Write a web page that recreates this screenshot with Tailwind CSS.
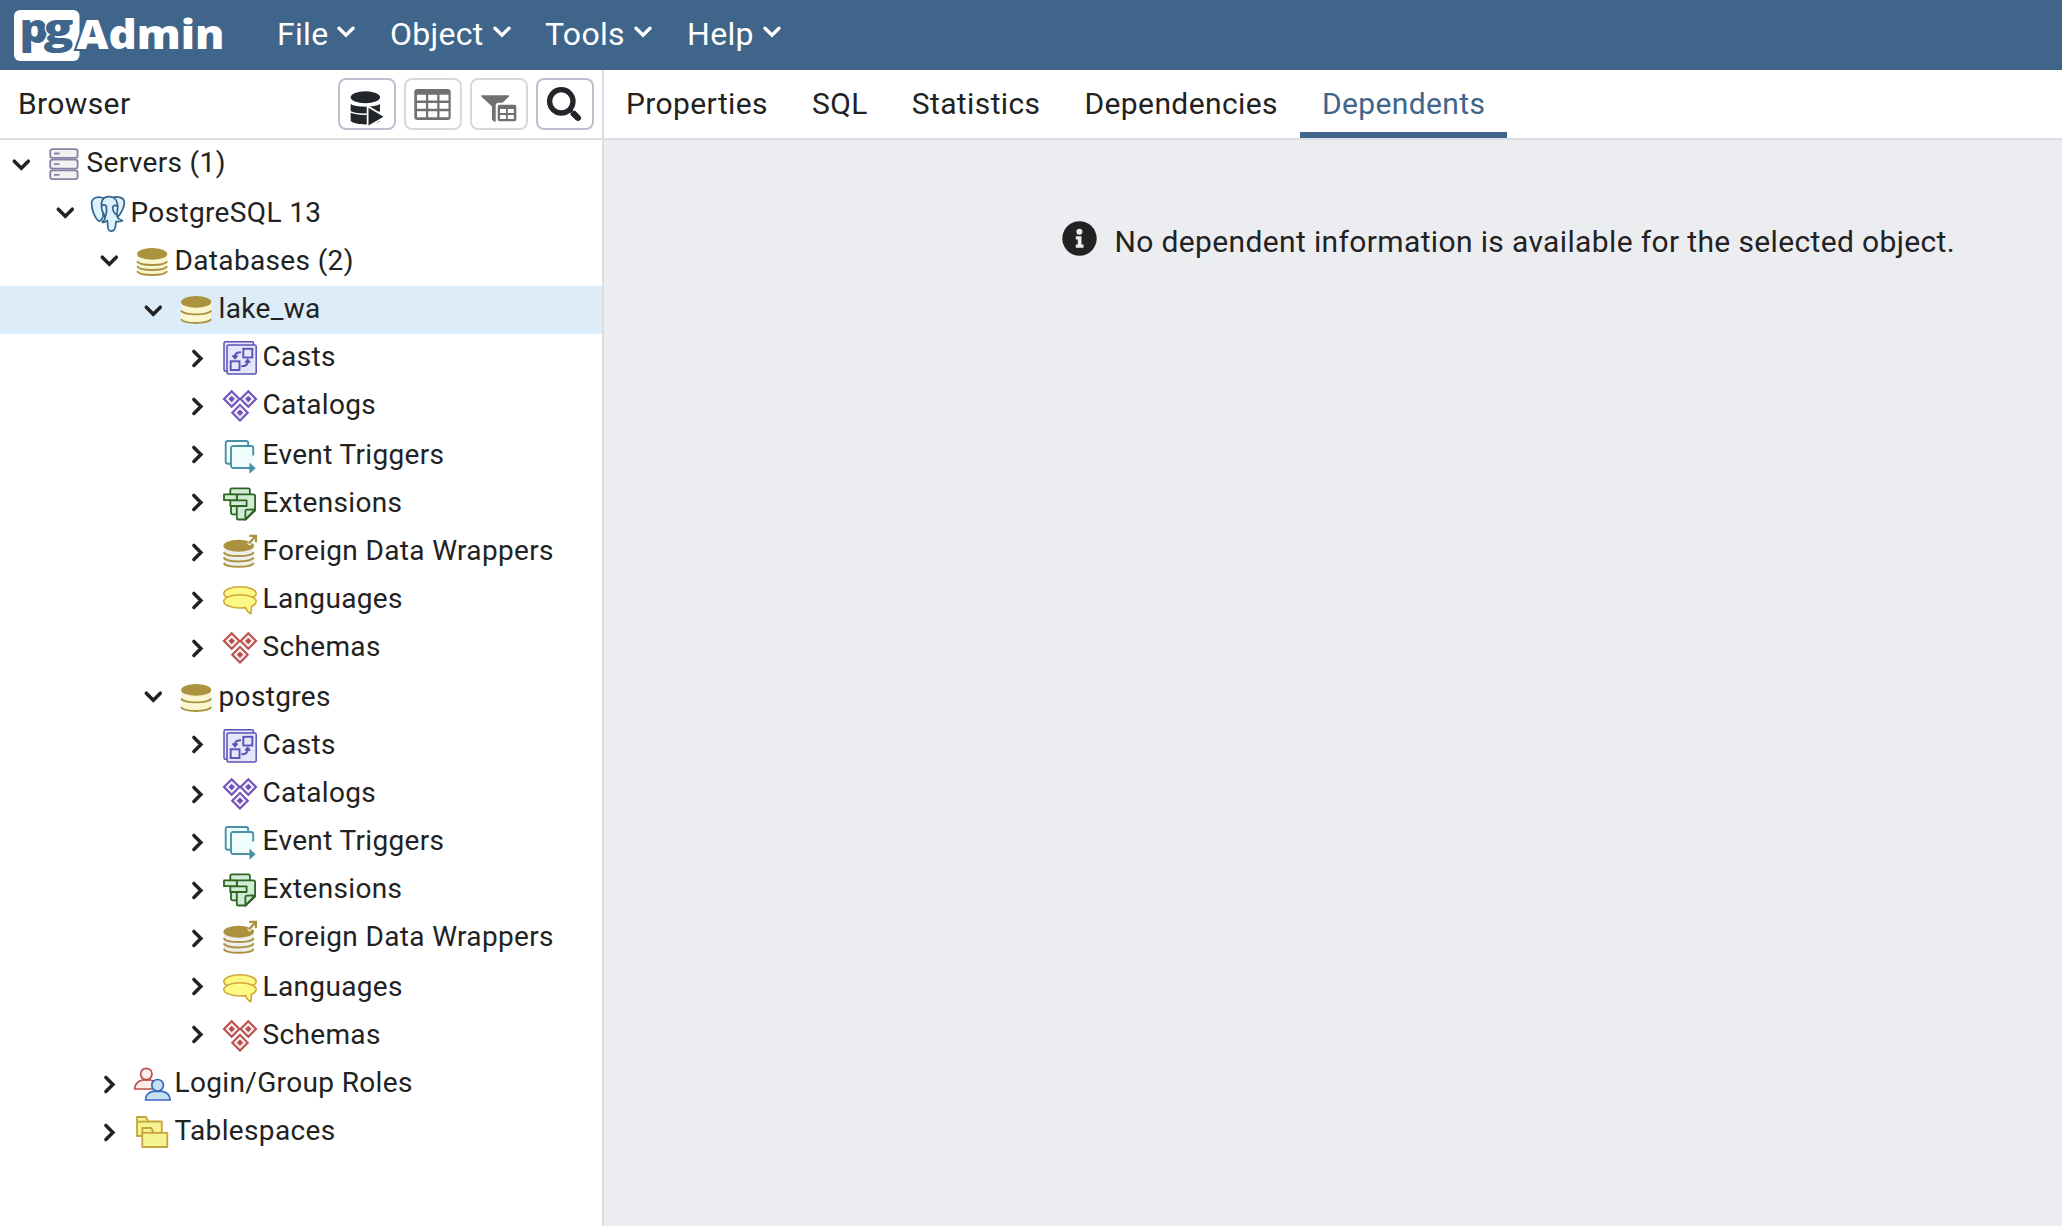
<!DOCTYPE html>
<html lang="en">
<head>
<meta charset="utf-8">
<title>pgAdmin</title>
<script src="https://cdn.jsdelivr.net/npm/@tailwindcss/browser@4"></script>
</head>
<body class="h-screen w-screen overflow-hidden bg-white text-[#222222] font-['Roboto',sans-serif] flex flex-col">

<svg class="hidden" aria-hidden="true">
  <symbol id="down" viewBox="0 0 42 48"><path d="M14.3 21.2l7 7 7-7" fill="none" stroke="#222" stroke-width="3.5" stroke-linecap="round"/></symbol>
  <symbol id="right" viewBox="0 0 42 48"><path d="M17.9 17.4l7 7-7 7" fill="none" stroke="#222" stroke-width="3.5" stroke-linecap="round"/></symbol>
  <symbol id="menuarrow" viewBox="0 0 18 12"><path d="M2 2.2l7 7 7-7" fill="none" stroke="#fff" stroke-width="3.4" stroke-linecap="round"/></symbol>

  <symbol id="servers" viewBox="0 0 44 48"><g fill="#f2f2f2" stroke="#8682a1" stroke-width="1.8">
    <rect x="8.2" y="9.2" width="27.4" height="8.7" rx="2.4"/><rect x="8.2" y="19.7" width="27.4" height="8.9" rx="2.4"/><rect x="8.2" y="30.4" width="27.4" height="8.7" rx="2.4"/>
    <path d="M12 13.5h5.5M12 24.1h5.5M12 34.8h5.5"/></g></symbol>

  <symbol id="elephant" viewBox="0 0 44 48"><g fill="#dff1fb" stroke="#33658f" stroke-width="1.7" stroke-linejoin="round" stroke-linecap="round">
    <path d="M18 8.500C13 5.800 6 7 5.600 13c-.2 6 3 14 6.400 17.500 2 1.700 3-.5 5-3.200z"/>
    <path d="M26 8c5-2.300 12-.8 12.300 4.200.2 5-3.600 11.200-6.600 15.100L28 26z"/>
    <path d="M15.500 17.500C15 11 16.500 7 22.500 6.700c6.500-.2 9 4.800 9.200 9.300.2 4-1 6.500-.8 9.300.2 3.500 3 4.500 5.700 5.200-2.500 1.600-5.200 1-6.600 1-.2 3.500-.3 6.500-2 8.500-2 1.800-5 1.300-5.800-1-.8-2.500-.2-6.500-1-8.500-1.700 2-3.400 2-5 1.600 1.800-1.600 3.200-2.600 3-4.600-.3-3-3.400-5-3.700-10z"/>
    <path d="M16 15.500c3-1.500 4.700 0 4.500 3 0 3 .5 6-1.500 8.500M31 16c-2-1.500-4.500-.5-4.300 2 .3 3 1.300 5.500 4.300 7" fill="none"/></g></symbol>

  <symbol id="databases" viewBox="0 0 44 48">
    <path d="M7.100 16v17.500c3 5.500 27 5.500 30.100 0V16z" fill="#f8f5d2"/>
    <path d="M7.100 23.300c3 5 27 5 30.100 0M7.100 28.300c3 5 27 5 30.100 0M7.100 33.300c3 5 27 5 30.100 0" fill="none" stroke="#ab923f" stroke-width="1.900"/>
    <ellipse cx="22.150" cy="15.900" rx="15.100" ry="5.800" fill="#ab923f"/></symbol>

  <symbol id="database" viewBox="0 0 44 48">
    <path d="M7.100 16v17.500c3 5.500 27 5.500 30.100 0V16z" fill="#f9f6d0"/>
    <path d="M7.100 24.500c3 5.200 27 5.200 30.100 0M7.100 33.100c3 5.200 27 5.200 30.100 0" fill="none" stroke="#ab923f" stroke-width="1.900"/>
    <ellipse cx="22.150" cy="15.900" rx="15.100" ry="5.800" fill="#ab923f"/></symbol>

  <symbol id="casts" viewBox="0 0 44 48"><g fill="#e6e6fb" stroke="#5953b5" stroke-width="1.500">
    <rect x="6" y="7.700" width="29.500" height="29.500" rx="1.500"/><rect x="9" y="10.900" width="29.200" height="29.200" rx="1.500"/>
    <rect x="25.300" y="14.800" width="9" height="8.700" stroke-width="1.900"/><rect x="12.700" y="27.300" width="8.800" height="8.700" stroke-width="1.900"/>
    <path d="M23 18.300c-4 0-6 1.500-6 4M23.300 32.300c4 0 6.300-1.300 6.300-4" fill="none" stroke-width="1.900"/>
    <path d="M14.300 21.800h5.400L17 25.300zM27 28.300h5.300l-2.700-3.500z" fill="#5953b5" stroke-width="1"/></g></symbol>

  <symbol id="diamonds" viewBox="0 0 44 48"><g stroke="currentColor" stroke-width="2">
    <path d="M13.700 9.200l7.800 7.800-7.800 7.800L5.900 17zM30.300 9.200l7.800 7.800-7.800 7.800-7.800-7.800zM22 22.900l7.800 7.800-7.800 7.800-7.800-7.800z" fill="currentColor" fill-opacity=".12"/>
    <path d="M13.700 14.300l2.700 2.700-2.700 2.700-2.700-2.700zM30.300 14.300l2.700 2.700-2.700 2.700-2.700-2.700zM22 28l2.700 2.700-2.700 2.700-2.700-2.700z" fill="currentColor" stroke-width="1"/></g></symbol>

  <symbol id="event" viewBox="0 0 44 48"><g fill="#effdfd" stroke="#4b91a5" stroke-width="1.900">
    <rect x="7.700" y="9" width="22.500" height="22.700" rx="2.200"/>
    <path d="M35.200 24V16.200a2.200 2.200 0 0 0-2.200-2.200H15.200a2.200 2.200 0 0 0-2.200 2.200v17.600a2.200 2.200 0 0 0 2.200 2.200H33L35.200 30z" stroke="none"/>
    <path d="M35.200 23.500V16.200a2.200 2.200 0 0 0-2.200-2.200H15.200a2.200 2.200 0 0 0-2.200 2.200v17.600a2.200 2.200 0 0 0 2.200 2.200H33" fill="none"/>
    <path d="M32 32l4.800 4.200L32 40.400z" fill="#4b91a5" stroke-width="1.200"/></g></symbol>

  <symbol id="extensions" viewBox="0 0 44 48"><g fill="#d0ebd6" stroke="#2f6423" stroke-width="1.800" stroke-linejoin="round">
    <path d="M13.500 26h6v8.300h-4.800a1.600 1.600 0 0 1-1.700-1.600V26z"/>
    <path d="M12.300 14.500V10a1.600 1.600 0 0 1 1.600-1.600h16.400A1.600 1.600 0 0 1 31.900 10v5h-12z"/>
    <path d="M20 14.400h15.500a1.600 1.600 0 0 1 1.600 1.600v14.500l-9.500 9H20.400a1.600 1.600 0 0 1-1.600-1.600V14.800z"/>
    <path d="M27.400 39.500v-8.300a1.500 1.500 0 0 1 1.500-1.500l8.200-.2z"/>
    <path d="M6 14.400h12.800v5.800H6zM12.300 20.300h16.300V26H12.300z"/></g></symbol>

  <symbol id="fdw" viewBox="0 0 44 48">
    <path d="M5.600 17v18c3 5.300 27 5.300 30.200 0V17z" fill="#f0eff0"/>
    <path d="M5.600 24.200c3 5.200 27 5.200 30.200 0M5.600 29.600c3 5.200 27 5.200 30.200 0M5.600 34.900c3 5.200 27 5.200 30.200 0" fill="none" stroke="#ab923f" stroke-width="2"/>
    <ellipse cx="20.700" cy="17.800" rx="15.300" ry="6" fill="#ab923f"/>
    <path d="M30.500 16.500l7-8" fill="none" stroke="#fff" stroke-width="3.500"/>
    <path d="M30.800 15.500l6.700-7.200M31.300 7.900h6.600v6.400" fill="none" stroke="#ab923f" stroke-width="2.300"/></symbol>

  <symbol id="languages" viewBox="0 0 44 48"><g fill="#fcf984" stroke="#d0a83a" stroke-width="1.600" stroke-linejoin="round">
    <ellipse cx="22" cy="17.400" rx="16.200" ry="6.700"/>
    <path d="M22 18.800c9 0 16.200 3 16.200 6.500 0 2.200-2.200 4-4.900 5.200.2 3-.2 5-.5 7.300-2.800-1.300-4.500-3.500-5.300-6.200-1.800.3-3.600.4-5.500.4-9 0-16.200-2.900-16.200-6.600S13 18.800 22 18.800z"/></g></symbol>

  <symbol id="roles" viewBox="0 0 44 48"><g stroke-width="1.700">
    <path d="M4.600 29c0-5 3.800-8.300 8-9h8c3 .6 5 2 6 4v5z" fill="#fdecea" stroke="#bb4e4c"/><circle cx="16.300" cy="14" r="5.700" fill="#fdecea" stroke="#bb4e4c"/>
    <path d="M15.500 40c0-4.700 3.400-8 7.700-8.700h9.200c4.300.7 7.800 4 7.800 8.700z" fill="#c6e0f0" stroke="#3768c0"/><circle cx="27.600" cy="25.300" r="5.800" fill="#c6e0f0" stroke="#3768c0"/></g></symbol>

  <symbol id="tablespaces" viewBox="0 0 44 48"><g fill="#f6f392" stroke="#c8a43c" stroke-width="1.800" stroke-linejoin="round">
    <path d="M7 28V9h9l2.300 4.500h13.500V28z"/><path d="M7 13.700h12" fill="none"/>
    <path d="M12.300 39V20h9l2.300 4.800h13.700V39z"/><path d="M12.300 24.800h12" fill="none"/></g></symbol>
</svg>

<header class="h-[70px] shrink-0 bg-[#3f658b] text-white flex items-center">
  <svg class="w-[264px] h-[70px] shrink-0" viewBox="0 0 264 70" font-family="Open Sans, sans-serif" font-weight="800">
    <rect x="14" y="10" width="65.500" height="51" rx="6" fill="#fff"/>
    <text x="19.500" y="42.500" font-size="40" textLength="29" lengthAdjust="spacingAndGlyphs" fill="#3f658b">p</text>
    <text x="43.500" y="43" font-size="40" textLength="30" lengthAdjust="spacingAndGlyphs" fill="#3f658b" stroke="#fff" stroke-width="2" paint-order="stroke">g</text>
    <text x="76.500" y="48.700" font-size="40" textLength="148" lengthAdjust="spacingAndGlyphs" fill="#fff" stroke="#3f658b" stroke-width="4" paint-order="stroke">Admin</text>
  </svg>
  <nav class="flex items-center text-[32px] leading-[68px] pb-[2px] pl-[13px] tracking-[0.3px]"></nav>
</header>

<div class="flex flex-1 min-h-0">
  <aside class="w-[604px] shrink-0 border-r-2 border-[#dddee4] flex flex-col">
    <div class="h-[70px] shrink-0 border-b-2 border-[#dddee4] flex items-center pl-[18px] pr-2">
      <span class="text-[30px] leading-[66px] flex-1 tracking-[0.38px]">Browser</span>
      <div class="flex gap-2">
        <button class="w-[58px] h-[52px] rounded-lg border-2 border-[#bac0d0]"><svg class="w-[54px] h-[48px]" viewBox="0 0 54 48">
          <path d="M10.700 24c4 3.500 25 3.500 29.300 0v17c-4 4.500-25 4.500-29.300 0z" fill="#222529"/>
          <path d="M9 31.200c6 4 26 4 33 0M9 21.500c6 5 26 5 33 0" fill="none" stroke="#fff" stroke-width="1.500"/>
          <ellipse cx="25.350" cy="17.300" rx="14.700" ry="6" fill="#222529"/>
          <path d="M28.500 27.800l15 8.900-15 8.900z" fill="#222529" stroke="#fff" stroke-width="3.500" paint-order="stroke"/></svg></button>
        <button class="w-[58px] h-[52px] rounded-lg border-2 border-[#d4d8df]"><svg class="w-[54px] h-[48px]" viewBox="0 0 54 48">
          <rect x="8.300" y="9" width="36.400" height="31" rx="3.200" fill="#707070"/>
          <path d="M11 14.800h9v5.700h-9zM22.200 14.800h9v5.700h-9zM33.500 14.800h9v5.700h-9zM11 23h9v5.700h-9zM22.200 23h9v5.700h-9zM33.500 23h9v5.700h-9zM11 31.300h9v5.900h-9zM22.200 31.300h9v5.900h-9zM33.500 31.300h9v5.900h-9z" fill="#fff"/></svg></button>
        <button class="w-[58px] h-[52px] rounded-lg border-2 border-[#d4d8df]"><svg class="w-[54px] h-[48px]" viewBox="0 0 54 48">
          <path d="M9.300 15.300H37v1.200l-6.500 6.300h-4.200q-2.600 0-2.600 2.600v16.300h-1.200L20 39.800V26.600L9.300 16.500z" fill="#707070"/>
          <rect x="25.700" y="24.700" width="18.600" height="16.600" rx="2" fill="#707070"/>
          <path d="M28 29h6v4h-6zM35.800 29h6v4h-6zM28 35h6v4h-6zM35.800 35h6v4h-6z" fill="#fff"/></svg></button>
        <button class="w-[58px] h-[52px] rounded-lg border-2 border-[#bac0d0]"><svg class="w-[54px] h-[48px]" viewBox="0 0 54 48">
          <g fill="none" stroke="#222529"><circle cx="23.300" cy="21.300" r="11.700" stroke-width="5.300"/><path d="M32 30l2 2" stroke-width="4"/><path d="M34.500 32.500l5.500 5.500" stroke-width="6"/><path d="M36 34l4 4" stroke-width="6" stroke-linecap="round"/></g></svg></button>
      </div>
    </div>
    <div id="tree" class="flex flex-col text-[28px] leading-[46px] tracking-[0.35px] whitespace-nowrap"></div>
  </aside>

  <main class="flex-1 min-w-0 flex flex-col bg-[#ecedf1]">
    <div id="tabs" class="h-[70px] shrink-0 bg-white border-b-2 border-[#dddee4] flex text-[30px] leading-[67px] tracking-[0.39px]"></div>
    <div class="flex pt-[76px] pl-[458px] items-start">
      <svg class="w-[35px] h-[35px] shrink-0 mt-[5px] mr-[17.5px]" viewBox="0 0 35 35"><circle cx="17.500" cy="17.500" r="17.200" fill="#222"/>
        <circle cx="17.400" cy="10.700" r="3" fill="#ecedf1"/><path d="M13.800 15.300h5.700v8.200h2v3.200h-7.700v-3.200h2v-5h-2z" fill="#ecedf1"/></svg>
      <p class="text-[30px] leading-[52px] tracking-[0.36px] whitespace-nowrap">No dependent information is available for the selected object.</p>
    </div>
  </main>
</div>

<script>
  document.querySelector('nav').innerHTML = [['File', 'w-[113px]'], ['Object', 'w-[155px]'], ['Tools', 'w-[142px]'], ['Help', 'w-[120px]']].map(([t, w]) =>
    `<span class="flex items-center gap-[9px] ${w}"><span>${t}</span><svg class="w-[18px] h-[12px] mb-[4px]"><use href="#menuarrow"/></svg></span>`).join('');

  document.getElementById('tabs').innerHTML = ['Properties', 'SQL', 'Statistics', 'Dependencies', 'Dependents'].map((t, i) =>
    `<span class="px-[22px] h-[68px] ${i === 4 ? 'text-[#3f658b] border-b-6 border-[#3f658b]' : ''}">${t}</span>`).join('');

  // depth, open, icon, label, row height, arrow raised
  const children = (first) => [
    [4, 0, 'casts', 'Casts', 48, !first], [4, 0, 'diamonds text-[#6f4fbc]', 'Catalogs', first ? 50 : 48],
    [4, 0, 'event', 'Event Triggers', 48, first], [4, 0, 'extensions', 'Extensions', 48, first],
    [4, 0, 'fdw', 'Foreign Data Wrappers', first ? 48 : 50], [4, 0, 'languages', 'Languages', 48, !first],
    [4, 0, 'diamonds text-[#bb4e4c]', 'Schemas', first ? 50 : 48, !first]];
  const rows = [
    [0, 1, 'servers', 'Servers (1)', 50], [1, 1, 'elephant', 'PostgreSQL 13', 48, 1], [2, 1, 'databases', 'Databases (2)', 48, 1],
    [3, 1, 'database', 'lake_wa', 48], ...children(true),
    [3, 1, 'database', 'postgres', 48, 1], ...children(false),
    [2, 0, 'roles', 'Login/Group Roles', 48], [2, 0, 'tablespaces', 'Tablespaces', 48]];
  document.getElementById('tree').innerHTML = rows.map(([d, open, icon, label, h, up]) => {
    const [id, color = ''] = icon.split(' ');
    return `<div class="flex items-start shrink-0 ${label === 'lake_wa' ? 'bg-[#dcedf9]' : ''}" style="height:${h}px;padding-left:${d * 44}px">
      <svg class="w-[42px] h-[48px] shrink-0 ${up ? '-mt-[2px]' : ''}"><use href="#${open ? 'down' : 'right'}"/></svg>
      <svg class="w-[44px] h-[48px] shrink-0 ${color}"><use href="#${id}"/></svg><span class="pl-[0.5px]">${label}</span></div>`;
  }).join('');
</script>
</body>
</html>
